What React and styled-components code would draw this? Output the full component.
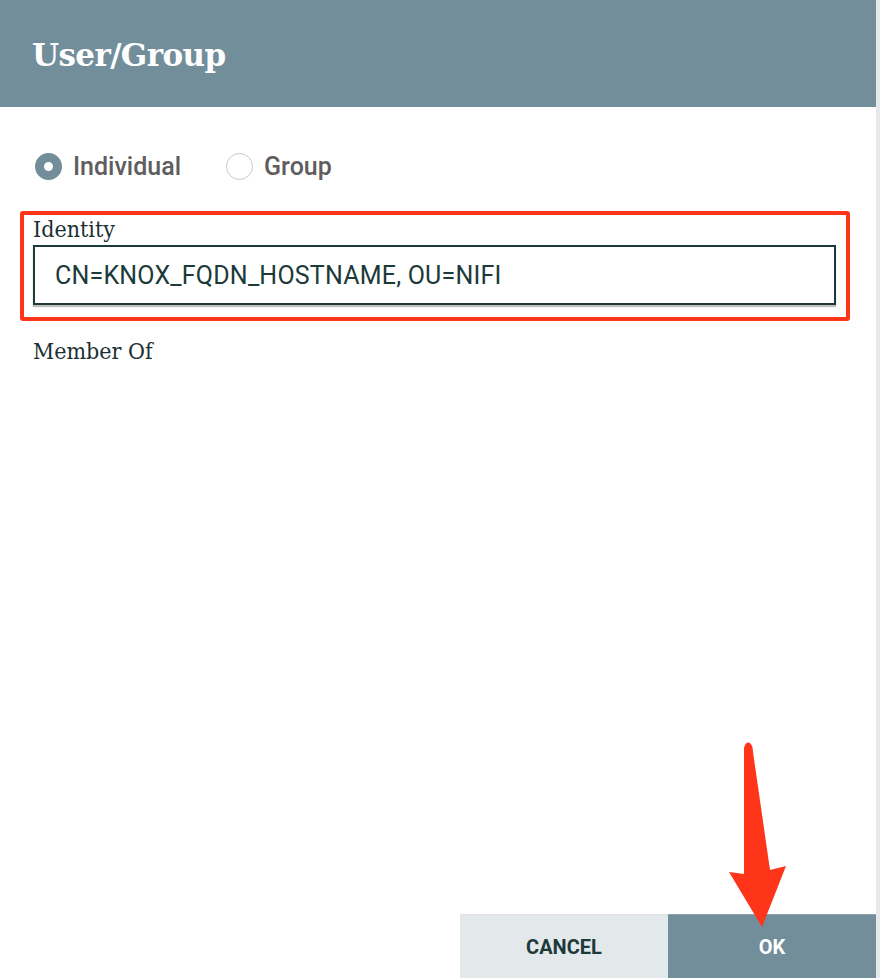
import React from 'react';
import styled, { createGlobalStyle } from 'styled-components';

const GlobalStyle = createGlobalStyle`
    html, body {
        margin: 0;
        padding: 0;
        background: #ffffff;
    }
`;

const App = () => {
    return (
        <>
            <GlobalStyle />
            <Page>
                <Dialog>
                    <Header>
                        <Title>User/Group</Title>
                    </Header>
                    <Body>
                        <RadioRow>
                            <RadioOption>
                                <RadioDot checked />
                                <RadioLabel>Individual</RadioLabel>
                            </RadioOption>
                            <RadioOption>
                                <RadioDot />
                                <RadioLabel>Group</RadioLabel>
                            </RadioOption>
                        </RadioRow>
                        <Highlight>
                            <FieldLabel>Identity</FieldLabel>
                            <TextInput>CN=KNOX_FQDN_HOSTNAME, OU=NIFI</TextInput>
                        </Highlight>
                        <FieldLabel>Member Of</FieldLabel>
                    </Body>
                    <Footer>
                        <Button>CANCEL</Button>
                        <Button primary>OK</Button>
                    </Footer>
                </Dialog>
                <Scrollbar />
                <Arrow viewBox="0 0 880 978" width="880" height="978">
                    <path
                        d="M744 748 Q746 741 750 743 Q753 746 753 752 L770 870 L786 866 L762 927 L729 872 L744 874 Z"
                        fill="#ff3519"
                    />
                </Arrow>
            </Page>
        </>
    );
};

export default App;

// Styled Components
const Page = styled.div`
    position: relative;
    display: flex;
    width: 880px;
    height: 978px;
    overflow: hidden;
`;

const Dialog = styled.div`
    display: flex;
    flex-direction: column;
    width: 876px;
    height: 100%;
`;

const Scrollbar = styled.div`
    width: 4px;
    background: #e6e9eb;
`;

const Header = styled.div`
    height: 107px;
    background: #728e9b;
    display: flex;
    align-items: center;
    padding-left: 32px;
    box-sizing: border-box;
`;

const Title = styled.h1`
    margin: 0;
    margin-top: 2px;
    font-family: "DejaVu Serif", serif;
    font-weight: bold;
    font-size: 31px;
    letter-spacing: -0.6px;
    color: #ffffff;
`;

const Body = styled.div`
    flex: 1;
    display: flex;
    flex-direction: column;
    padding: 45px 26px 0 20px;
`;

const RadioRow = styled.div`
    display: flex;
    align-items: center;
    gap: 45px;
    padding-left: 15px;
    margin-bottom: 30px;
`;

const RadioOption = styled.div`
    display: flex;
    align-items: center;
    gap: 11px;
`;

const RadioDot = styled.span`
    box-sizing: border-box;
    width: 27px;
    height: 27px;
    border-radius: 50%;
    background: #ffffff;
    border: ${(p) => (p.checked ? '9px solid #728e9b' : '1px solid #c8c8c8')};
`;

const RadioLabel = styled.span`
    font-family: Roboto, sans-serif;
    font-weight: 500;
    font-size: 25px;
    color: #5f5d5d;
`;

const Highlight = styled.div`
    border: 4px solid #ff3519;
    border-radius: 3px;
    padding: 0 10px 12px 9px;
    margin-bottom: 16px;
`;

const FieldLabel = styled.div`
    font-family: "DejaVu Serif", serif;
    font-stretch: condensed;
    font-weight: 300;
    font-size: 23px;
    color: #1a3032;
    line-height: 28px;
    margin: 0 0 2px 13px;

    ${Highlight} & {
        margin-left: 0;
    }
`;

const TextInput = styled.div`
    box-sizing: border-box;
    height: 60px;
    border: 2px solid #1c3a3a;
    box-shadow: 0 2px 1px rgba(0, 0, 0, 0.25);
    display: flex;
    align-items: center;
    padding-left: 20px;
    font-family: Roboto, sans-serif;
    font-size: 25px;
    letter-spacing: 0.2px;
    color: #1c3a3a;
`;

const Footer = styled.div`
    display: flex;
    justify-content: flex-end;
`;

const Button = styled.div`
    width: 208px;
    height: 63px;
    display: flex;
    align-items: center;
    justify-content: center;
    font-family: Roboto, sans-serif;
    font-weight: bold;
    font-size: 20px;
    background: ${(p) => (p.primary ? '#728e9b' : '#e3e8eb')};
    color: ${(p) => (p.primary ? '#ffffff' : '#1c3a3a')};
    border-top: 1px solid ${(p) => (p.primary ? '#8fa5af' : '#dde2e5')};
`;

const Arrow = styled.svg`
    position: absolute;
    left: 0;
    top: 0;
    pointer-events: none;
`;
